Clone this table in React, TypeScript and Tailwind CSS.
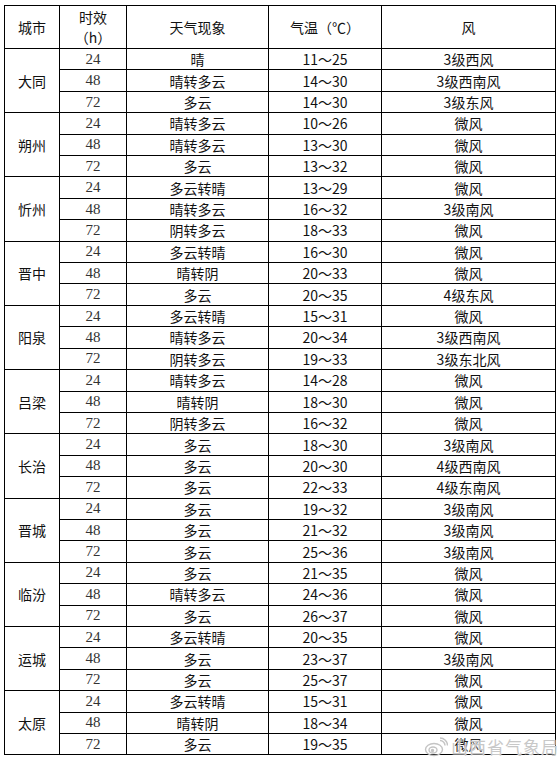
const cities: [string, [string, string, string, string][]][] = [
  ['大同', [['24', '晴', '11～25', '3级西风'], ['48', '晴转多云', '14～30', '3级西南风'], ['72', '多云', '14～30', '3级东风']]],
  ['朔州', [['24', '晴转多云', '10～26', '微风'], ['48', '晴转多云', '13～30', '微风'], ['72', '多云', '13～32', '微风']]],
  ['忻州', [['24', '多云转晴', '13～29', '微风'], ['48', '晴转多云', '16～32', '3级南风'], ['72', '阴转多云', '18～33', '微风']]],
  ['晋中', [['24', '多云转晴', '16～30', '微风'], ['48', '晴转阴', '20～33', '微风'], ['72', '多云', '20～35', '4级东风']]],
  ['阳泉', [['24', '多云转晴', '15～31', '微风'], ['48', '晴转多云', '20～34', '3级西南风'], ['72', '阴转多云', '19～33', '3级东北风']]],
  ['吕梁', [['24', '晴转多云', '14～28', '微风'], ['48', '晴转阴', '18～30', '微风'], ['72', '阴转多云', '16～32', '微风']]],
  ['长治', [['24', '多云', '18～30', '3级南风'], ['48', '多云', '20～30', '4级西南风'], ['72', '多云', '22～33', '4级东南风']]],
  ['晋城', [['24', '多云', '19～32', '3级南风'], ['48', '多云', '21～32', '3级南风'], ['72', '多云', '25～36', '3级南风']]],
  ['临汾', [['24', '多云', '21～35', '微风'], ['48', '晴转多云', '24～36', '微风'], ['72', '多云', '26～37', '微风']]],
  ['运城', [['24', '多云转晴', '20～35', '微风'], ['48', '多云', '23～37', '3级南风'], ['72', '多云', '25～37', '微风']]],
  ['太原', [['24', '多云转晴', '15～31', '微风'], ['48', '晴转阴', '18～34', '微风'], ['72', '多云', '19～35', '微风']]],
];

const cell = 'border border-black text-center align-middle p-0 leading-none';

export default function App() {
  return (
    <div className="relative w-[560px] h-[762px] bg-white pl-[4px] pt-[5px] text-[14px] text-[#111] font-['Noto_Sans_CJK_SC',sans-serif]">
      <table className="border-collapse table-fixed w-[551px]">
        <colgroup>
          <col className="w-[55px]" />
          <col className="w-[67px]" />
          <col className="w-[142px]" />
          <col className="w-[113px]" />
          <col className="w-[174px]" />
        </colgroup>
        <thead>
          <tr className="h-[43px]">
            <th className={`${cell} font-normal`}>城市</th>
            <th className={`${cell} font-normal`}>
              <div className="leading-[20px]">时效</div>
              <div className="leading-[20px]">（h）</div>
            </th>
            <th className={`${cell} font-normal`}>天气现象</th>
            <th className={`${cell} font-normal`}>气温（℃）</th>
            <th className={`${cell} font-normal`}>风</th>
          </tr>
        </thead>
        <tbody>
          {cities.map(([name, rows]) =>
            rows.map((r, i) => (
              <tr key={name + r[0]} className="h-[21.42px]">
                {i === 0 && (
                  <td rowSpan={3} className={cell}>
                    {name}
                  </td>
                )}
                <td className={`${cell} font-['Liberation_Serif',serif] text-[15px] text-[#333]`}>{r[0]}</td>
                <td className={cell}>{r[1]}</td>
                <td className={cell}>{r[2]}</td>
                <td className={cell}>{r[3]}</td>
              </tr>
            ))
          )}
        </tbody>
      </table>

      <div className="absolute left-[424px] top-[734px] flex items-center gap-[3px] pointer-events-none">
        <svg width="24" height="20" viewBox="0 0 24 20" fill="none" stroke="#c4c4c4" strokeWidth="1.4">
          <ellipse cx="10" cy="12.5" rx="8.5" ry="6" />
          <ellipse cx="9" cy="13" rx="4" ry="3" />
          <circle cx="8.5" cy="13.5" r="1" fill="#c4c4c4" />
          <path d="M16 3.5 a5 5 0 0 1 5 5" />
          <path d="M16 1 a7.5 7.5 0 0 1 7.5 7.5" />
        </svg>
        <span className="text-[17px] tracking-[1px] text-[#c8c8c8] [text-shadow:0_0_2px_#fff]">山西省气象局</span>
      </div>
    </div>
  );
}
